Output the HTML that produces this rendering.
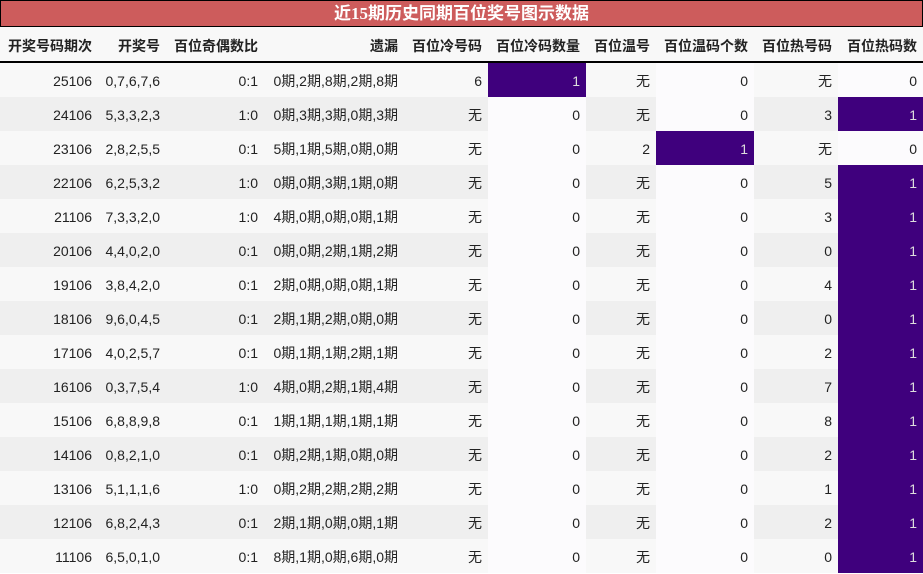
<!DOCTYPE html><html><head><meta charset="utf-8"><style>
body{margin:0;width:923px;height:574px;overflow:hidden;background:#fff;font-family:"Liberation Sans","Noto Sans CJK SC",sans-serif;}
.t{height:25px;background:#cd5c5c;border:1px solid #000;color:#fff;font-weight:bold;font-size:17px;text-align:center;line-height:25px;font-family:"Liberation Serif","Noto Sans CJK SC",serif;}
table{border-collapse:collapse;width:923px;table-layout:fixed;font-size:14px;color:#222}
th{height:31px;font-weight:bold;text-align:right;padding:3px 6px 0 0;background:#f8f8f8;border-bottom:2px solid #000;white-space:nowrap}
td{height:32px;padding:2px 6px 0 0;text-align:right;white-space:nowrap}
tr.a td{background:#f8f8f8}tr.b td{background:#efefef}
tr td.c{background:#fcfbfd}tr td.p{background:#3f007d;color:#ddd}
</style></head><body><div class="t">近15期历史同期百位奖号图示数据</div>
<table><colgroup><col style="width:98px"><col style="width:68px"><col style="width:98px"><col style="width:140px"><col style="width:84px"><col style="width:98px"><col style="width:70px"><col style="width:98px"><col style="width:84px"><col style="width:85px"></colgroup>
<tr><th>开奖号码期次</th><th>开奖号</th><th>百位奇偶数比</th><th>遗漏</th><th>百位冷号码</th><th>百位冷码数量</th><th>百位温号</th><th>百位温码个数</th><th>百位热号码</th><th>百位热码数</th></tr>
<tr class="a"><td>25106</td><td>0,7,6,7,6</td><td>0:1</td><td>0期,2期,8期,2期,8期</td><td>6</td><td class="p">1</td><td>无</td><td class="c">0</td><td>无</td><td class="c">0</td></tr>
<tr class="b"><td>24106</td><td>5,3,3,2,3</td><td>1:0</td><td>0期,3期,3期,0期,3期</td><td>无</td><td class="c">0</td><td>无</td><td class="c">0</td><td>3</td><td class="p">1</td></tr>
<tr class="a"><td>23106</td><td>2,8,2,5,5</td><td>0:1</td><td>5期,1期,5期,0期,0期</td><td>无</td><td class="c">0</td><td>2</td><td class="p">1</td><td>无</td><td class="c">0</td></tr>
<tr class="b"><td>22106</td><td>6,2,5,3,2</td><td>1:0</td><td>0期,0期,3期,1期,0期</td><td>无</td><td class="c">0</td><td>无</td><td class="c">0</td><td>5</td><td class="p">1</td></tr>
<tr class="a"><td>21106</td><td>7,3,3,2,0</td><td>1:0</td><td>4期,0期,0期,0期,1期</td><td>无</td><td class="c">0</td><td>无</td><td class="c">0</td><td>3</td><td class="p">1</td></tr>
<tr class="b"><td>20106</td><td>4,4,0,2,0</td><td>0:1</td><td>0期,0期,2期,1期,2期</td><td>无</td><td class="c">0</td><td>无</td><td class="c">0</td><td>0</td><td class="p">1</td></tr>
<tr class="a"><td>19106</td><td>3,8,4,2,0</td><td>0:1</td><td>2期,0期,0期,0期,1期</td><td>无</td><td class="c">0</td><td>无</td><td class="c">0</td><td>4</td><td class="p">1</td></tr>
<tr class="b"><td>18106</td><td>9,6,0,4,5</td><td>0:1</td><td>2期,1期,2期,0期,0期</td><td>无</td><td class="c">0</td><td>无</td><td class="c">0</td><td>0</td><td class="p">1</td></tr>
<tr class="a"><td>17106</td><td>4,0,2,5,7</td><td>0:1</td><td>0期,1期,1期,2期,1期</td><td>无</td><td class="c">0</td><td>无</td><td class="c">0</td><td>2</td><td class="p">1</td></tr>
<tr class="b"><td>16106</td><td>0,3,7,5,4</td><td>1:0</td><td>4期,0期,2期,1期,4期</td><td>无</td><td class="c">0</td><td>无</td><td class="c">0</td><td>7</td><td class="p">1</td></tr>
<tr class="a"><td>15106</td><td>6,8,8,9,8</td><td>0:1</td><td>1期,1期,1期,1期,1期</td><td>无</td><td class="c">0</td><td>无</td><td class="c">0</td><td>8</td><td class="p">1</td></tr>
<tr class="b"><td>14106</td><td>0,8,2,1,0</td><td>0:1</td><td>0期,2期,1期,0期,0期</td><td>无</td><td class="c">0</td><td>无</td><td class="c">0</td><td>2</td><td class="p">1</td></tr>
<tr class="a"><td>13106</td><td>5,1,1,1,6</td><td>1:0</td><td>0期,2期,2期,2期,2期</td><td>无</td><td class="c">0</td><td>无</td><td class="c">0</td><td>1</td><td class="p">1</td></tr>
<tr class="b"><td>12106</td><td>6,8,2,4,3</td><td>0:1</td><td>2期,1期,0期,0期,1期</td><td>无</td><td class="c">0</td><td>无</td><td class="c">0</td><td>2</td><td class="p">1</td></tr>
<tr class="a"><td>11106</td><td>6,5,0,1,0</td><td>0:1</td><td>8期,1期,0期,6期,0期</td><td>无</td><td class="c">0</td><td>无</td><td class="c">0</td><td>0</td><td class="p">1</td></tr>
</table></body></html>
